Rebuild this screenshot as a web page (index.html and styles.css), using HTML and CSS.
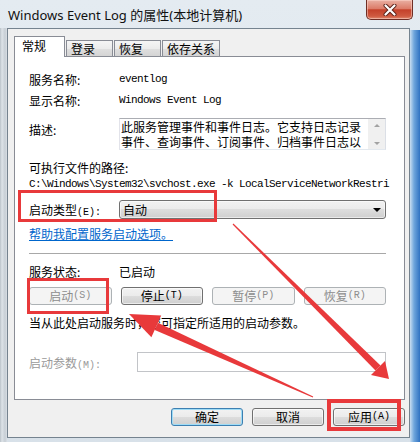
FILE: index.html
```html
<!DOCTYPE html>
<html lang="zh-CN">
<head>
<meta charset="utf-8">
<title>Windows Event Log 的属性(本地计算机)</title>
<link rel="stylesheet" href="styles.css">
</head>
<body>
<div class="window">
  <div class="titlebar">
    <span class="title">Windows Event Log 的属性(本地计算机)</span>
    <span class="close">
      <svg width="14" height="12" viewBox="0 0 14 12">
        <path d="M2.5 1.5 L11.5 10.5 M11.5 1.5 L2.5 10.5" stroke="#5b2219" stroke-width="4" stroke-linecap="round"/>
        <path d="M2.5 1.5 L11.5 10.5 M11.5 1.5 L2.5 10.5" stroke="#ffffff" stroke-width="2.2" stroke-linecap="round"/>
      </svg>
    </span>
  </div>
  <div class="client">
    <div class="tabs">
      <div class="tab active">常规</div>
      <div class="tab">登录</div>
      <div class="tab">恢复</div>
      <div class="tab">依存关系</div>
    </div>
    <div class="panel">
      <div class="row r1"><span class="label">服务名称:</span><span class="mono">eventlog</span></div>
      <div class="row r2"><span class="label">显示名称:</span><span class="mono">Windows Event Log</span></div>
      <div class="row desc">
        <span class="label">描述:</span>
        <div class="textbox">
          <div class="text"><div class="tl">此服务管理事件和事件日志。它支持日志记录</div><div class="tl">事件、查询事件、订阅事件、归档事件日志以</div></div>
          <div class="scroll"><span class="up"></span><span class="down"></span></div>
        </div>
      </div>
      <div class="pathlabel">可执行文件的路径:</div>
      <div class="path mono">C:\Windows\System32\svchost.exe -k LocalServiceNetworkRestri</div>
      <div class="row combo-row">
        <span class="label">启动类型<span class="m">(E):</span></span>
        <div class="combo"><span>自动</span><span class="caret"></span></div>
      </div>
      <div class="linkrow"><a class="link">帮助我配置服务启动选项。</a></div>
      <div class="sep"></div>
      <div class="row status"><span class="label">服务状态:</span><span>已启动</span></div>
      <div class="btnrow">
        <div class="btn disabled">启动<span class="m">(S)</span></div>
        <div class="btn">停止<span class="m">(T)</span></div>
        <div class="btn disabled">暂停<span class="m">(P)</span></div>
        <div class="btn disabled">恢复<span class="m">(R)</span></div>
      </div>
      <div class="info">当从此处启动服务时，您可指定所适用的启动参数。</div>
      <div class="row params">
        <span class="label wide dim">启动参数<span class="m">(M):</span></span>
        <div class="input"></div>
      </div>
    </div>
    <div class="footer">
      <div class="btn default wbtn">确定</div>
      <div class="btn wbtn">取消</div>
      <div class="btn wbtn">应用<span class="m">(A)</span></div>
    </div>
  </div>
  <svg class="annot" width="420" height="442" viewBox="0 0 420 442">
    <g fill="none" stroke="#e8393b">
      <rect x="19.5" y="191.5" width="196" height="29" stroke-width="3"/>
      <rect x="28.5" y="279.5" width="79" height="33" stroke-width="3"/>
      <rect x="329" y="401" width="70" height="28" stroke-width="4"/>
    </g>
    <g fill="#e8393b">
      <polygon points="233.4,223.6 380.5,365.5 375.5,370.5 232.6,224.4"/>
      <polygon points="385,361 389,379 371,375"/>
      <polygon points="157.9,322.7 313.2,396.5 312.8,397.5 154.7,329.9"/>
      <polygon points="129,314 161.2,315.4 151.4,337.3"/>
    </g>
  </svg>
</div>
</body>
</html>
```

FILE: styles.css
```css
* { box-sizing: border-box; }
html, body { margin: 0; padding: 0; }
body {
  width: 420px;
  height: 442px;
  overflow: hidden;
  font-family: "Noto Sans CJK SC", "Noto Sans", sans-serif;
  font-size: 12px;
  color: #000;
}
.window {
  position: relative;
  width: 420px;
  height: 442px;
  display: flex;
  flex-direction: column;
  background:
    linear-gradient(90deg, #c9def1 0, #6fa6dc 40%, #2f72c2 100%) right 0 top 30px / 10px 412px no-repeat,
    linear-gradient(90deg, #b9c1c8 0, #dde3e8 2px, #c7ced5 5px, #d9dfe5 7px) left 0 top 28px / 7px 414px no-repeat,
    linear-gradient(180deg, #e4ebf1 0, #d8e1e9 100%);
}
.titlebar {
  height: 28px;
  flex: none;
  display: flex;
  justify-content: space-between;
  align-items: flex-start;
  padding: 0 7px 0 8px;
}
.title {
  margin-top: 6px;
  font-family: "Noto Sans", "Noto Sans CJK SC", sans-serif;
  font-size: 13px;
  line-height: 18px;
  color: #111;
}
.close {
  width: 47px;
  height: 20px;
  border: 1px solid #6e2e25;
  border-top: none;
  border-radius: 0 0 5px 5px;
  background: linear-gradient(180deg, #e9b0a3 0, #dc7c69 45%, #c4412a 52%, #cf5a40 85%, #e08a70 100%);
  display: flex;
  align-items: center;
  justify-content: center;
  box-shadow: inset 0 0 0 1px rgba(255, 220, 210, 0.5);
}
.client {
  flex: none;
  margin: 0 10px 0 7px;
  height: 410px;
  border: 1px solid #75838f;
  background: #f0f0f0;
  display: flex;
  flex-direction: column;
}
.tabs {
  display: flex;
  align-items: flex-end;
  height: 20px;
  margin: 7px 0 0 6px;
}
.tab {
  height: 16px;
  min-width: 47px;
  padding: 0 4px;
  border: 1px solid #898c95;
  border-bottom: none;
  background: linear-gradient(180deg, #f5f5f5 0, #ececec 50%, #e0e0e0 50%, #d4d4d4 100%);
  line-height: 15px;
  white-space: nowrap;
}
.tab + .tab { margin-left: 1px; }
.tab.active {
  position: relative;
  z-index: 1;
  width: 51px;
  height: 21px;
  margin-bottom: -1px;
  padding-left: 7px;
  background: #fff;
  line-height: 18px;
}
.panel {
  margin: 0 4px 0 6px;
  height: 344px;
  border: 1px solid #898c95;
  background: #fff;
  padding: 0 18px 0 14px;
}
.row { display: flex; align-items: center; }
.label { width: 90px; flex: none; white-space: nowrap; }
.label.wide { width: 108px; }
.dim { color: #9a9a9a; }
.mono {
  font-family: "Liberation Mono", monospace;
  font-size: 11px;
  letter-spacing: -0.6px;
  white-space: nowrap;
}
.m {
  font-family: "Liberation Mono", monospace;
  font-size: 10px;
}
.r1 { margin-top: 12px; height: 20px; }
.r2 { margin-top: 1px; height: 20px; }
.desc { margin-top: 8px; align-items: flex-start; }
.desc .label { margin-top: 2px; line-height: 20px; }
.textbox {
  flex: 1;
  height: 32px;
  border: 1px solid #abadb3;
  border-color: #abadb3 #dbdfe6 #e3e9ef #e2e3ea;
  display: flex;
  background: #fff;
}
.textbox .text {
  flex: 1;
  min-width: 0;
  padding-left: 1px;
}
.tl {
  height: 15px;
  line-height: 15px;
  white-space: nowrap;
}
.scroll {
  width: 17px;
  flex: none;
  background: #f0f0f0;
  display: flex;
  flex-direction: column;
  justify-content: space-between;
  align-items: center;
  padding: 5px 0 4px;
}
.up, .down {
  width: 0;
  height: 0;
  border-left: 3px solid transparent;
  border-right: 3px solid transparent;
}
.up { border-bottom: 3px solid #a2a2a2; }
.down { border-top: 3px solid #a2a2a2; }
.pathlabel { margin-top: 10px; line-height: 16px; height: 16px; }
.path { line-height: 16px; height: 16px; }
.combo-row { margin-top: 8px; height: 19px; }
.combo {
  flex: 1;
  height: 19px;
  border: 1px solid #707070;
  border-radius: 3px;
  background: linear-gradient(180deg, #f2f2f2 0, #ebebeb 50%, #dddddd 50%, #cfcfcf 100%);
  box-shadow: inset 0 0 0 1px rgba(255, 255, 255, 0.55);
  display: flex;
  align-items: center;
  justify-content: space-between;
  padding: 0 4px 0 3px;
}
.caret {
  width: 0;
  height: 0;
  border-left: 4px solid transparent;
  border-right: 4px solid transparent;
  border-top: 4px solid #000;
}
.linkrow { margin-top: 7px; height: 16px; line-height: 16px; }
.link { color: #0066cc; text-decoration: underline; }
.sep { margin-top: 11px; height: 1px; background: #a8a8a8; }
.status { margin-top: 9px; height: 16px; }
.btnrow {
  margin-top: 8px;
  display: grid;
  grid-template-columns: repeat(4, 1fr);
  gap: 9px;
}
.btn {
  height: 18px;
  border: 1px solid #707070;
  border-radius: 3px;
  background: linear-gradient(180deg, #f2f2f2 0, #ebebeb 50%, #dddddd 50%, #cfcfcf 100%);
  box-shadow: inset 0 0 0 1px rgba(255, 255, 255, 0.6);
  display: flex;
  align-items: center;
  justify-content: center;
  line-height: 16px;
  white-space: nowrap;
}
.btn.disabled {
  border-color: #adb2b5;
  background: #f4f4f4;
  color: #8d8d8d;
  box-shadow: none;
}
.btn.default {
  border-color: #3c7fb1;
  box-shadow: inset 0 0 0 1px #9fdcf6;
}
.info { margin-top: 10px; height: 16px; line-height: 16px; }
.params { margin-top: 21px; height: 20px; }
.input {
  flex: 1;
  height: 20px;
  border: 1px solid #c2c4c8;
  background: #fff;
}
.footer {
  margin-top: 8px;
  display: flex;
  justify-content: flex-end;
  gap: 9px;
  padding-right: 4px;
}
.wbtn { width: 72px; }
.annot {
  position: absolute;
  left: 0;
  top: 0;
  z-index: 10;
  pointer-events: none;
}
```
